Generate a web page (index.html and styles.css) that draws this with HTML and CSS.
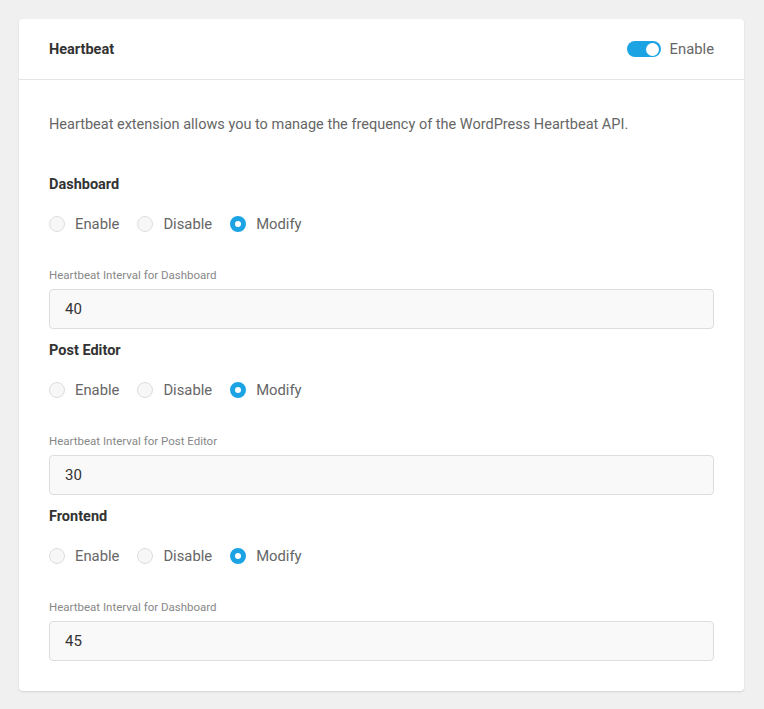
FILE: index.html
```html
<!DOCTYPE html>
<html lang="en">
<head>
    <meta charset="UTF-8">
    <meta name="viewport" content="width=device-width, initial-scale=1.0">
    <title>Heartbeat</title>
    <link rel="stylesheet" href="styles.css">
</head>
<body>
    <div class="card">
        <!-- Card header -->
        <div class="card-header">
            <h2>Heartbeat</h2>
            <label class="switch-wrap">
                <span class="switch"><span class="knob"></span></span>
                <span class="switch-label">Enable</span>
            </label>
        </div>

        <div class="card-body">
            <p class="desc">Heartbeat extension allows you to manage the frequency of the WordPress Heartbeat API.</p>

            <!-- Dashboard -->
            <div class="section">
                <h3>Dashboard</h3>
                <div class="radios">
                    <span class="radio-item"><span class="radio"></span>Enable</span>
                    <span class="radio-item"><span class="radio"></span>Disable</span>
                    <span class="radio-item"><span class="radio checked"></span>Modify</span>
                </div>
                <div class="field-label">Heartbeat Interval for Dashboard</div>
                <div class="input">40</div>
            </div>

            <!-- Post Editor -->
            <div class="section">
                <h3>Post Editor</h3>
                <div class="radios">
                    <span class="radio-item"><span class="radio"></span>Enable</span>
                    <span class="radio-item"><span class="radio"></span>Disable</span>
                    <span class="radio-item"><span class="radio checked"></span>Modify</span>
                </div>
                <div class="field-label">Heartbeat Interval for Post Editor</div>
                <div class="input">30</div>
            </div>

            <!-- Frontend -->
            <div class="section">
                <h3>Frontend</h3>
                <div class="radios">
                    <span class="radio-item"><span class="radio"></span>Enable</span>
                    <span class="radio-item"><span class="radio"></span>Disable</span>
                    <span class="radio-item"><span class="radio checked"></span>Modify</span>
                </div>
                <div class="field-label">Heartbeat Interval for Dashboard</div>
                <div class="input">45</div>
            </div>
        </div>
    </div>
</body>
</html>
```

FILE: styles.css
```css
body {
    font-family: Roboto, 'Liberation Sans', sans-serif;
    background-color: #f0f0f0;
    margin: 0;
    padding: 19px 20px 19px 19px;
}

.card {
    background-color: #fff;
    border-radius: 4px;
    box-shadow: 0 1px 2px rgba(0, 0, 0, 0.12);
}

/* Header */
.card-header {
    height: 60px;
    padding: 0 30px;
    display: flex;
    align-items: center;
    justify-content: space-between;
    border-bottom: 1px solid #e5e5e5;
}

.card-header h2 {
    margin: 0;
    font-size: 14.5px;
    font-weight: 700;
    color: #333;
}

.switch-wrap {
    display: flex;
    align-items: center;
    gap: 9px;
}

.switch {
    width: 34px;
    height: 16px;
    border-radius: 8px;
    background-color: #1ba3e3;
    display: flex;
    align-items: center;
    justify-content: flex-end;
    padding: 0 2px;
    box-sizing: border-box;
}

.knob {
    width: 13px;
    height: 13px;
    border-radius: 50%;
    background-color: #fff;
}

.switch-label {
    font-size: 14.8px;
    color: #666;
}

/* Body */
.card-body {
    padding: 35px 30px 30px;
}

.desc {
    margin: 0 0 40px;
    font-size: 14.5px;
    line-height: 20px;
    color: #666;
}

.section + .section {
    margin-top: 12px;
}

.section h3 {
    margin: 0;
    font-size: 14.5px;
    line-height: 20px;
    font-weight: 700;
    color: #333;
}

.radios {
    display: flex;
    gap: 18px;
    margin-top: 19px;
    height: 20px;
}

.radio-item {
    display: flex;
    align-items: center;
    gap: 10px;
    font-size: 14.8px;
    color: #666;
}

.radio {
    width: 16px;
    height: 16px;
    border-radius: 50%;
    border: 1px solid #ddd;
    background-color: #f7f7f7;
    box-sizing: border-box;
}

.radio.checked {
    border: 5px solid #1ba3e3;
    background-color: #fff;
}

.field-label {
    margin-top: 34px;
    font-size: 11.5px;
    line-height: 14px;
    color: #888;
}

.input {
    margin-top: 7px;
    height: 40px;
    box-sizing: border-box;
    padding: 0 15px;
    display: flex;
    align-items: center;
    background-color: #f9f9f9;
    border: 1px solid #ddd;
    border-radius: 4px;
    font-size: 15px;
    color: #333;
}
```
